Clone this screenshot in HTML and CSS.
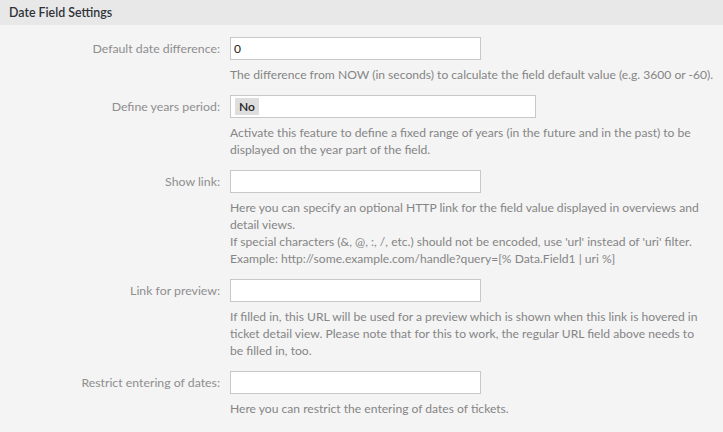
FILE: index.html
```html
<!DOCTYPE html>
<html lang="en">
<head>
<meta charset="utf-8">
<title>Date Field Settings</title>
<link rel="stylesheet" href="styles.css">
</head>
<body>
<section class="widget">
  <div class="widget-header"><h2>Date Field Settings</h2></div>
  <div class="widget-body">
    <div class="field">
      <label class="field-label">Default date difference:</label>
      <div class="input short"><span class="value">0</span></div>
      <p class="desc">The difference from NOW (in seconds) to calculate the field default value (e.g. 3600 or -60).</p>
    </div>
    <div class="field">
      <label class="field-label">Define years period:</label>
      <div class="input long"><span class="chip">No</span></div>
      <p class="desc">Activate this feature to define a fixed range of years (in the future and in the past) to be<br>displayed on the year part of the field.</p>
    </div>
    <div class="field">
      <label class="field-label">Show link:</label>
      <div class="input short"></div>
      <p class="desc">Here you can specify an optional HTTP link for the field value displayed in overviews and<br>detail views.<br>If special characters (&amp;, @, :, /, etc.) should not be encoded, use 'url' instead of 'uri' filter.<br>Example: http://some.example.com/handle?query=[% Data.Field1 | uri %]</p>
    </div>
    <div class="field">
      <label class="field-label">Link for preview:</label>
      <div class="input short"></div>
      <p class="desc">If filled in, this URL will be used for a preview which is shown when this link is hovered in<br>ticket detail view. Please note that for this to work, the regular URL field above needs to<br>be filled in, too.</p>
    </div>
    <div class="field">
      <label class="field-label">Restrict entering of dates:</label>
      <div class="input short"></div>
      <p class="desc">Here you can restrict the entering of dates of tickets.</p>
    </div>
  </div>
</section>
</body>
</html>
```

FILE: styles.css
```css
html, body {
  margin: 0;
  padding: 0;
  background: #f4f4f4;
}
body {
  font-family: Lato, "Open Sans", sans-serif;
  font-size: 12px;
  color: #333;
  width: 723px;
  height: 432px;
  overflow: hidden;
}
.widget-header {
  background: #e8e8e8;
  height: 25px;
  display: flex;
  align-items: center;
  padding: 0 9px;
}
.widget-header h2 {
  margin: 0;
  font-size: 12.4px;
  font-weight: 600;
  color: #2f3338;
}
.widget-body {
  padding-top: 12px;
}
.field {
  display: grid;
  grid-template-columns: 220px auto;
  column-gap: 10px;
  row-gap: 6px;
  margin-bottom: 12px;
}
.field-label {
  grid-column: 1;
  grid-row: 1;
  align-self: center;
  text-align: right;
  color: #8e8e8e;
  font-size: 12.3px;
}
.input {
  grid-column: 2;
  grid-row: 1;
  box-sizing: border-box;
  height: 23px;
  background: #fff;
  border: 1px solid #c8c8c8;
  display: flex;
  align-items: center;
  padding: 0 3px;
}
.input.short { width: 251px; }
.input.long { width: 306px; }
.value {
  color: #222;
  font-size: 12px;
}
.chip {
  background: #dedede;
  color: #222;
  font-weight: 600;
  padding: 0 4px;
  margin-left: 1px;
  line-height: 17px;
  font-size: 12px;
}
.desc {
  grid-column: 2;
  grid-row: 2;
  margin: 0;
  color: #858585;
  font-size: 12.1px;
  line-height: 17px;
  white-space: nowrap;
}
```
